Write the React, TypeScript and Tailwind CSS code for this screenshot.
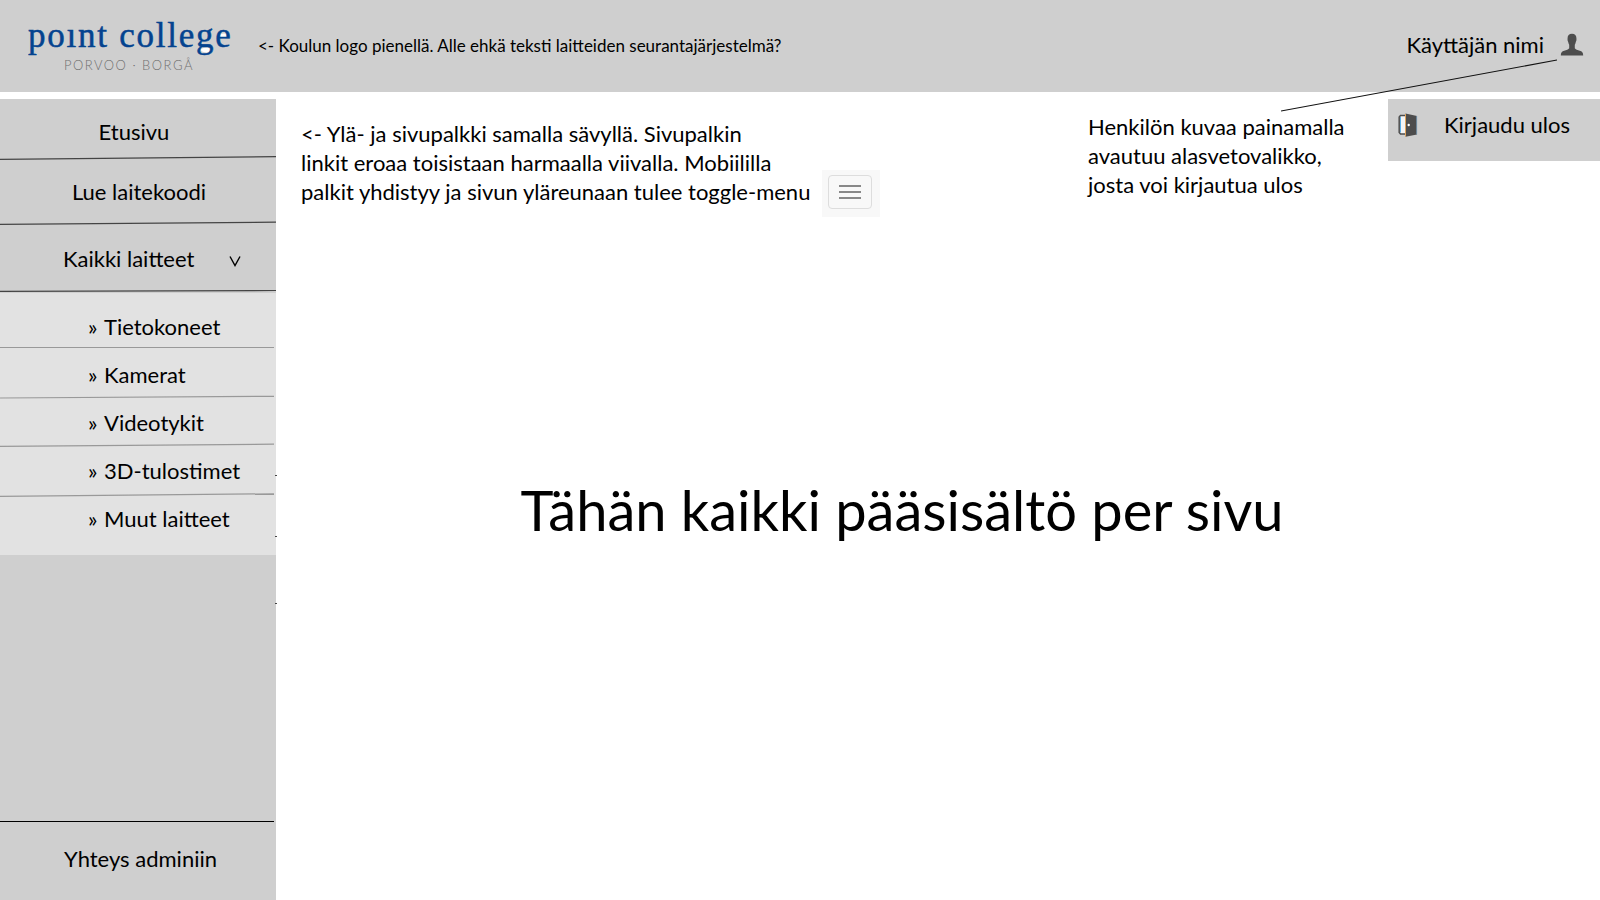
import React from "react";

type RuleProps = { from: number; to: number; color: string; inset?: boolean };

/** Hand-drawn, slightly slanted divider between two links. */
function Rule({ from, to, color, inset = false }: RuleProps) {
  return (
    <svg
      aria-hidden="true"
      className={inset ? "block h-1 w-full pr-0.5" : "block h-1 w-full"}
      viewBox="0 0 276 4"
      preserveAspectRatio="none"
    >
      <line x1="0" y1={from} x2="276" y2={to} stroke={color} strokeWidth="1.2" />
    </svg>
  );
}

function Logo() {
  return (
    <a href="#" aria-label="Point College" className="block shrink-0">
      <svg width="210" height="74" viewBox="0 0 210 74">
        <ellipse cx="179" cy="41" rx="6" ry="2.5" fill="#fff" />
        <ellipse cx="196" cy="27" rx="4" ry="2.5" fill="#fff" />
        <text
          x="0"
          y="38"
          fill="#04438f"
          stroke="#04438f"
          strokeWidth="0.5"
          className="font-['Liberation_Serif',serif] text-[35px] tracking-wider"
        >
          poınt college
        </text>
        <text
          x="36"
          y="61"
          fill="#6f6f6f"
          className="font-[Lato,sans-serif] text-[13px] font-light tracking-[1.5px]"
        >
          PORVOO · BORGÅ
        </text>
      </svg>
    </a>
  );
}

function UserIcon() {
  return (
    <svg aria-hidden="true" width="24" height="24" viewBox="0 0 24 24" fill="#4d4d4d">
      <path d="M12 .8C9 .8 7.600 2.400 7.600 5c0 1-.2 1.600 0 2.600.1.700.5.900.6 1.400.2 1.200.5 2 1 2.700v3.500c-.6 1.200-2.900 1.800-5 2.500-2.200.7-3.400 1.600-3.400 4.800h22.400c0-3.200-1.200-4.100-3.400-4.800-2.100-.7-4.400-1.300-5-2.500v-3.500c.5-.7.8-1.500 1-2.700.1-.5.5-.7.600-1.400.2-1 0-1.600 0-2.600C16.400 2.400 15 .8 12 .8z" />
    </svg>
  );
}

function DoorIcon() {
  return (
    <svg aria-hidden="true" width="20" height="24" viewBox="0 0 20 24">
      <path d="M8 2.500H2.500L1.200 4v15.500L2.500 21H8" fill="#f4f4f4" stroke="#4d4d4d" strokeWidth="1.500" />
      <path d="M2.500 4v15.500" stroke="#5aaee6" strokeWidth="1" />
      <path d="M7.500 .5 19 3v18.500L7.500 23.800z" fill="#4d4d4d" />
      <path d="M7.500 1v22.500" stroke="#e0a45c" strokeWidth="1" />
      <path d="M18.700 3v18.500" stroke="#7fa6c4" strokeWidth="0.800" />
      <circle cx="10.700" cy="12" r="1.200" fill="#fff" />
    </svg>
  );
}

const devices = [
  { name: "Tietokoneet", pad: "pt-5 pb-1", rule: [2.5, 2.5] },
  { name: "Kamerat", pad: "pt-3 pb-1.5", rule: [3, 1.3] },
  { name: "Videotykit", pad: "pt-2.5 pb-1.5", rule: [3.3, 1.2] },
  { name: "3D-tulostimet", pad: "pt-2.5 pb-2", rule: [3.4, 0.8] },
  { name: "Muut laitteet", pad: "pt-2 pb-[22px]", rule: null },
];

function Sidebar() {
  return (
    <nav className="relative flex w-[276px] shrink-0 flex-col bg-[#cfcfcf]">
      <a href="#" className="block pt-[19px] pr-2 pb-2.5 text-center">Etusivu</a>
      <Rule from={3.4} to={0.6} color="#444" />
      <a href="#" className="block pt-[18px] pb-[15px] pl-0.5 text-center">Lue laitekoodi</a>
      <Rule from={3.4} to={1.2} color="#444" />
      <button type="button" aria-expanded="true" className="flex items-center pt-5 pb-4 pl-[63px] text-left">
        <span className="w-[166px]">Kaikki laitteet</span>
        <svg aria-hidden="true" width="12" height="28" viewBox="0 0 12 28" fill="none" stroke="#000" strokeWidth="1.400">
          <path d="M1 11.500 6 20.500 11 11.500" />
        </svg>
      </button>
      <Rule from={2.4} to={1.5} color="#444" />
      <ul className="bg-[#e2e2e2]">
        {devices.map((d) => (
          <li key={d.name}>
            <a href="#" className={`block pl-[88px] ${d.pad}`}>
              <span className="inline-block w-4">»</span>
              {d.name}
            </a>
            {d.rule && <Rule from={d.rule[0]} to={d.rule[1]} color="#999" inset />}
          </li>
        ))}
      </ul>
      <div className="mt-auto">
        <div className="mr-0.5 h-px bg-black" />
        <a href="#" className="block pt-[23px] pb-[27px] pl-16">Yhteys adminiin</a>
      </div>
      <svg aria-hidden="true" className="absolute top-[376px] -right-px" width="2" height="130" viewBox="0 0 2 130" fill="#444">
        <rect y="0" width="2" height="1" />
        <rect y="61" width="2" height="1" />
        <rect y="128" width="2" height="1" />
      </svg>
    </nav>
  );
}

export default function App() {
  return (
    <div className="flex min-h-screen flex-col gap-[7px] bg-white font-[Lato,sans-serif] text-[22px] leading-7 text-black">
      <header className="relative flex h-[92px] items-center bg-[#cfcfcf] pr-4 pl-7">
        <Logo />
        <p className="pl-5 text-[17px]">
          &lt;- Koulun logo pienellä. Alle ehkä teksti laitteiden seurantajärjestelmä?
        </p>
        <button type="button" className="ml-auto flex items-center gap-4 pb-0.5">
          Käyttäjän nimi
          <UserIcon />
        </button>
        <svg aria-hidden="true" className="pointer-events-none absolute top-[59px] right-[43px]" width="276" height="53" viewBox="0 0 276 53">
          <line x1="0" y1="52" x2="276" y2="1" stroke="#111" strokeWidth="1.100" />
        </svg>
      </header>

      <div className="flex flex-1">
        <Sidebar />
        <main className="flex flex-1 flex-col">
          <div className="flex items-start pl-[25px]">
            <div className="flex items-end pt-5">
              <p className="pb-[11px] leading-[29px]">
                &lt;- Ylä- ja sivupalkki samalla sävyllä. Sivupalkin
                <br />
                linkit eroaa toisistaan harmaalla viivalla. Mobiililla
                <br />
                palkit yhdistyy ja sivun yläreunaan tulee toggle-menu
              </p>
              <div className="ml-3 bg-[#f8f8f8] pt-[5px] pr-2 pb-2 pl-1.5">
                <button
                  type="button"
                  aria-label="Toggle-menu"
                  className="flex h-[34px] w-11 flex-col items-center justify-center gap-1 rounded border border-[#ddd]"
                >
                  <span className="h-0.5 w-[22px] bg-[#888]" />
                  <span className="h-0.5 w-[22px] bg-[#888]" />
                  <span className="h-0.5 w-[22px] bg-[#888]" />
                </button>
              </div>
            </div>
            <p className="ml-auto w-[300px] pt-[13px] leading-[29px]">
              Henkilön kuvaa painamalla
              <br />
              avautuu alasvetovalikko,
              <br />
              josta voi kirjautua ulos
            </p>
            <button type="button" className="flex h-[62px] w-[212px] items-center gap-[26px] bg-[#cfcfcf] pb-[11px] pl-[10px]">
              <DoorIcon />
              Kirjaudu ulos
            </button>
          </div>
          <div className="flex flex-1 items-center justify-center pr-[72px] pb-[97px]">
            <h1 className="text-[56px] leading-none">Tähän kaikki pääsisältö per sivu</h1>
          </div>
        </main>
      </div>
    </div>
  );
}
